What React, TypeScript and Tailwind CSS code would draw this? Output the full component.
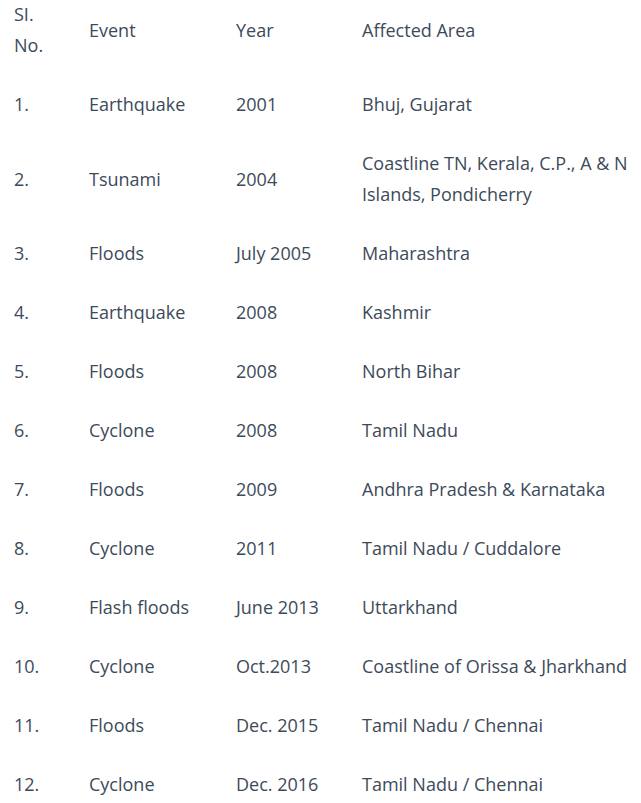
const rows = [
  ["1.", "Earthquake", "2001", "Bhuj, Gujarat"],
  ["2.", "Tsunami", "2004", "Coastline TN, Kerala, C.P., A & N Islands, Pondicherry"],
  ["3.", "Floods", "July 2005", "Maharashtra"],
  ["4.", "Earthquake", "2008", "Kashmir"],
  ["5.", "Floods", "2008", "North Bihar"],
  ["6.", "Cyclone", "2008", "Tamil Nadu"],
  ["7.", "Floods", "2009", "Andhra Pradesh & Karnataka"],
  ["8.", "Cyclone", "2011", "Tamil Nadu / Cuddalore"],
  ["9.", "Flash floods", "June 2013", "Uttarkhand"],
  ["10.", "Cyclone", "Oct.2013", "Coastline of Orissa & Jharkhand"],
  ["11.", "Floods", "Dec. 2015", "Tamil Nadu / Chennai"],
  ["12.", "Cyclone", "Dec. 2016", "Tamil Nadu / Chennai"],
];

export default function App() {
  return (
    <div className="bg-white w-[641px] h-[803px] overflow-hidden">
      <table
        className="-mt-[15px] w-full table-fixed border-collapse text-[18px] leading-[31px] text-[#3d4a5a]"
        style={{ fontFamily: '"Open Sans", "Liberation Sans", sans-serif' }}
      >
        <thead>
          <tr>
            <th className="w-[89px] py-[14px] pl-[14px] text-left font-normal align-middle">
              SI.
              <br />
              No.
            </th>
            <th className="w-[147px] py-[14px] text-left font-normal align-middle">Event</th>
            <th className="w-[126px] py-[14px] text-left font-normal align-middle">Year</th>
            <th className="py-[14px] pr-[10px] text-left font-normal align-middle">Affected Area</th>
          </tr>
        </thead>
        <tbody>
          {rows.map((r) => (
            <tr key={r[0]}>
              <td className="py-[14px] pl-[14px] align-middle">{r[0]}</td>
              <td className="py-[14px] align-middle">{r[1]}</td>
              <td className="py-[14px] align-middle">{r[2]}</td>
              <td className="py-[14px] pr-[10px] align-middle">{r[3]}</td>
            </tr>
          ))}
        </tbody>
      </table>
    </div>
  );
}
